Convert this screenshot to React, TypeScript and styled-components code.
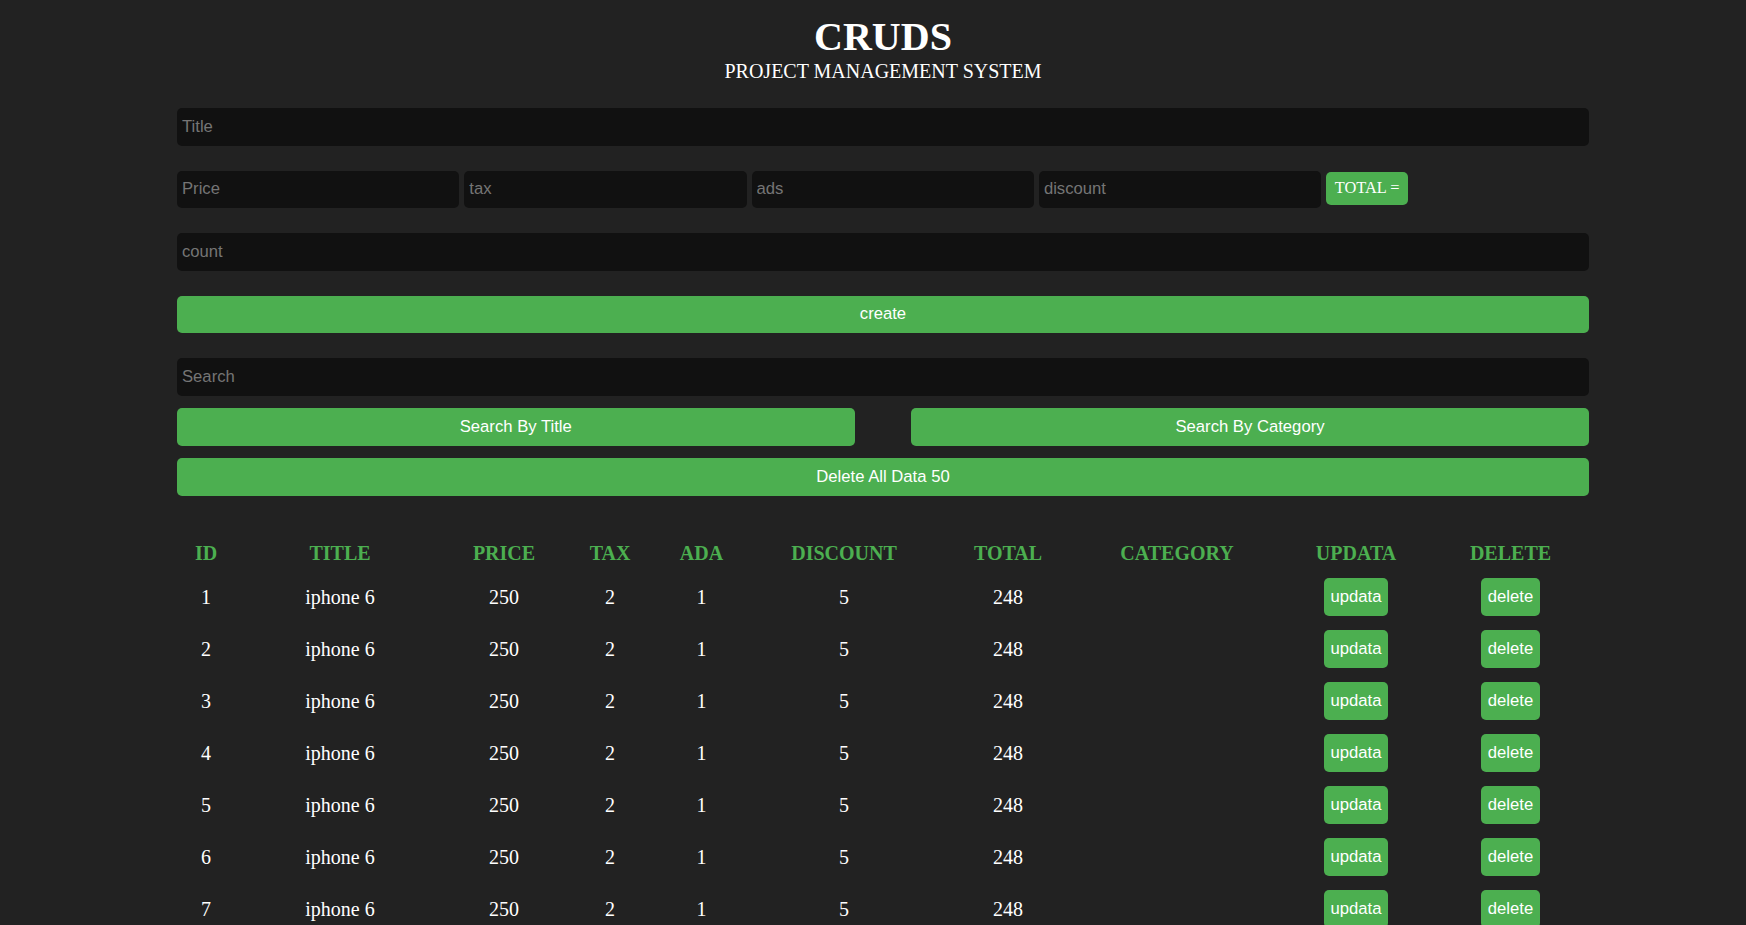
import React from "react";
import styled, { createGlobalStyle } from "styled-components";

const GlobalStyle = createGlobalStyle`
  * { box-sizing: border-box; margin: 0; padding: 0; }
  html, body { background: #222222; overflow: hidden; }
  body { color: #ffffff; font-family: "Liberation Serif", "Times New Roman", serif; }
`;

const Page = styled.div`
  width: 1412px;
  margin: 0 0 0 177px;
  padding-top: 13.5px;
`;

const Head = styled.header`
  text-align: center;
  text-transform: uppercase;
  margin-bottom: 25.5px;
`;

const Title = styled.h1`
  font-size: 40px;
  line-height: 46px;
  font-weight: 700;
`;

const Subtitle = styled.h2`
  font-size: 20px;
  line-height: 23px;
  font-weight: 400;
`;

const Form = styled.div`
  display: flex;
  flex-direction: column;
`;

const Field = styled.input<{ $gap?: number }>`
  display: block;
  width: 100%;
  height: 37.5px;
  border: none;
  outline: none;
  background: #111111;
  border-radius: 5px;
  padding: 0 5px;
  color: #ffffff;
  font-family: "Liberation Sans", Arial, sans-serif;
  font-size: 16.67px;
  margin-bottom: ${(p) => (p.$gap ?? 25)}px;
  &::placeholder { color: #757575; }
`;

const PriceRow = styled.div`
  display: flex;
  align-items: flex-start;
  gap: 5px;
  margin-bottom: 25px;
`;

const PriceField = styled.input`
  width: 282.3px;
  height: 37.5px;
  border: none;
  outline: none;
  background: #111111;
  border-radius: 5px;
  padding: 0 5px;
  color: #ffffff;
  font-family: "Liberation Sans", Arial, sans-serif;
  font-size: 16.67px;
  &::placeholder { color: #757575; }
`;

const Total = styled.small`
  display: inline-block;
  margin-top: 1px;
  background: #4caf50;
  color: #ffffff;
  border-radius: 5px;
  padding: 7.5px 8.5px;
  font-family: "Liberation Serif", "Times New Roman", serif;
  font-size: 16.4px;
  line-height: 18.5px;
`;

const GreenButton = styled.button<{ $gap?: number; $w?: string }>`
  display: block;
  width: ${(p) => p.$w ?? "100%"};
  height: 37.5px;
  border: none;
  border-radius: 5px;
  background: #4caf50;
  color: #ffffff;
  font-family: "Liberation Sans", Arial, sans-serif;
  font-size: 16.67px;
  cursor: pointer;
  margin-bottom: ${(p) => (p.$gap ?? 0)}px;
`;

const SearchRow = styled.div`
  display: flex;
  justify-content: space-between;
  margin-bottom: 12.5px;
`;

const Table = styled.table`
  width: 1412px;
  margin-top: 39.5px;
  border-collapse: collapse;
  table-layout: fixed;
  text-align: center;
`;

const Th = styled.th`
  height: 36px;
  padding: 0;
  color: #4caf50;
  font-size: 20px;
  font-weight: 700;
  text-transform: uppercase;
  vertical-align: middle;
`;

const Td = styled.td`
  height: 52px;
  padding: 0;
  font-size: 20px;
  vertical-align: middle;
`;

const RowButton = styled.button`
  height: 38px;
  padding: 0 6.5px;
  border: none;
  border-radius: 5px;
  background: #4caf50;
  color: #ffffff;
  font-family: "Liberation Sans", Arial, sans-serif;
  font-size: 16.67px;
  cursor: pointer;
  vertical-align: middle;
`;

const columns = [
  { label: "ID", w: 58 },
  { label: "TITLE", w: 210 },
  { label: "PRICE", w: 118 },
  { label: "TAX", w: 94 },
  { label: "ADA", w: 89 },
  { label: "DISCOUNT", w: 196 },
  { label: "TOTAL", w: 132 },
  { label: "CATEGORY", w: 206 },
  { label: "UPDATA", w: 152 },
  { label: "DELETE", w: 157 },
];

const rows = Array.from({ length: 7 }, (_, i) => ({
  id: i + 1,
  title: "iphone 6",
  price: 250,
  tax: 2,
  ads: 1,
  discount: 5,
  total: 248,
  category: "",
}));

export default function App() {
  return (
    <>
      <GlobalStyle />
      <Page>
        <Head>
          <Title>CRUDS</Title>
          <Subtitle>Project Management System</Subtitle>
        </Head>
        <Form>
          <Field placeholder="Title" />
          <PriceRow>
            <PriceField placeholder="Price" />
            <PriceField placeholder="tax" />
            <PriceField placeholder="ads" />
            <PriceField placeholder="discount" />
            <Total>TOTAL =</Total>
          </PriceRow>
          <Field placeholder="count" />
          <GreenButton $gap={25}>create</GreenButton>
          <Field placeholder="Search" $gap={12.5} />
          <SearchRow>
            <GreenButton $w="677.5px">Search By Title</GreenButton>
            <GreenButton $w="678px">Search By Category</GreenButton>
          </SearchRow>
          <GreenButton>Delete All Data 50</GreenButton>
        </Form>
        <Table>
          <colgroup>
            {columns.map((c) => (
              <col key={c.label} style={{ width: c.w }} />
            ))}
          </colgroup>
          <thead>
            <tr>
              {columns.map((c) => (
                <Th key={c.label}>{c.label}</Th>
              ))}
            </tr>
          </thead>
          <tbody>
            {rows.map((r) => (
              <tr key={r.id}>
                <Td>{r.id}</Td>
                <Td>{r.title}</Td>
                <Td>{r.price}</Td>
                <Td>{r.tax}</Td>
                <Td>{r.ads}</Td>
                <Td>{r.discount}</Td>
                <Td>{r.total}</Td>
                <Td>{r.category}</Td>
                <Td>
                  <RowButton>updata</RowButton>
                </Td>
                <Td>
                  <RowButton>delete</RowButton>
                </Td>
              </tr>
            ))}
          </tbody>
        </Table>
      </Page>
    </>
  );
}
